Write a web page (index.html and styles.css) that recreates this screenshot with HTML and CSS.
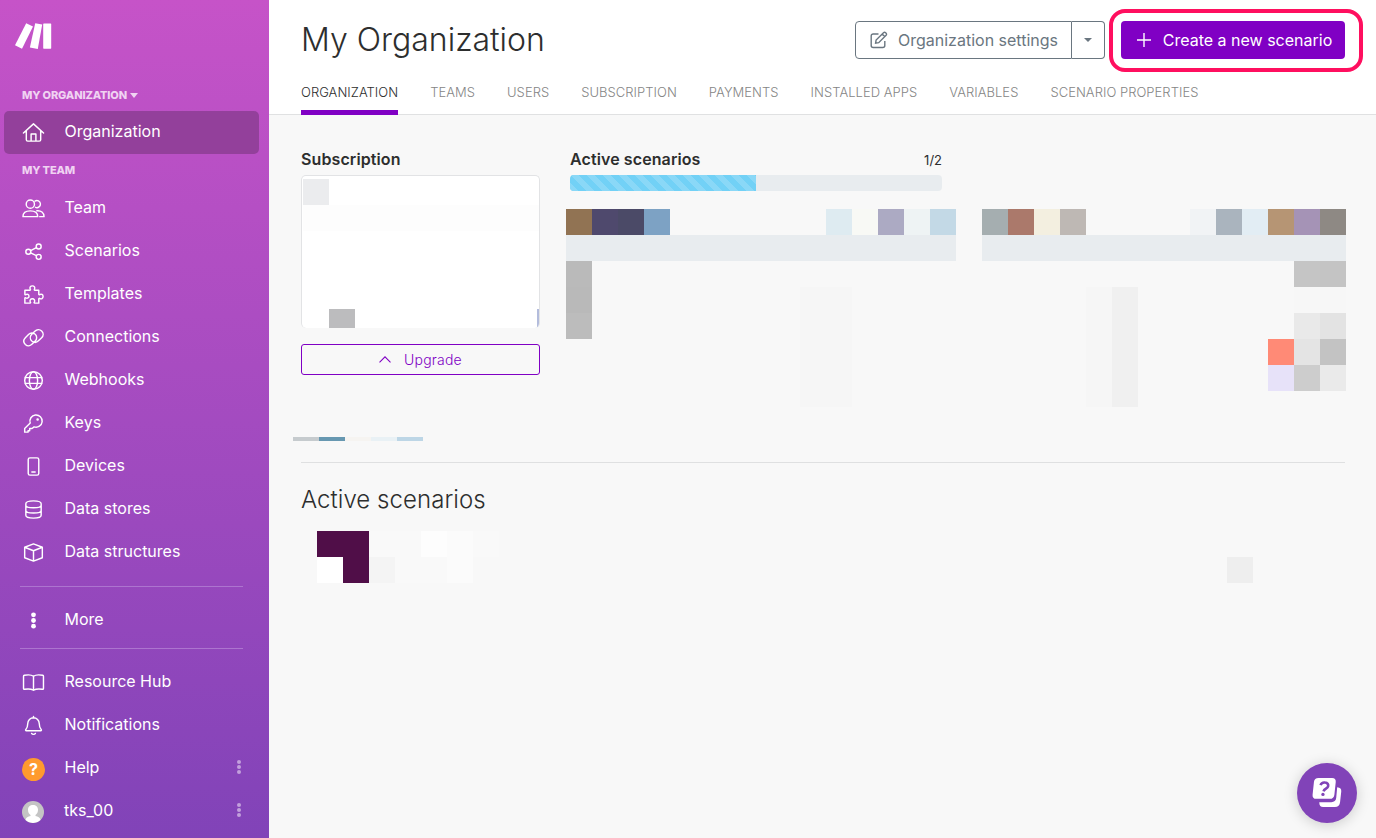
FILE: index.html
```html
<!DOCTYPE html>
<html lang="en">
<head>
  <meta charset="UTF-8">
  <title>My Organization</title>
  <link rel="stylesheet" href="styles.css">
</head>

<body>

<aside class="sidebar">
  <svg class="logo" width="38" height="28" viewBox="0 0 38 28" fill="#fff">
    <path d="M11.2 1.2 18 4.500 7 26.800 0 23.300z"/>
    <path d="M20.200 1.200 27.200 2.600 22.800 26.900 14.900 25.400z"/>
    <rect x="28.200" y="1.400" width="8" height="25.300" rx=".6"/>
  </svg>

  <div class="section-title">MY ORGANIZATION <span class="caret"></span></div>
  <nav>
    <a class="nav-item active">
      <svg class="icon" viewBox="0 0 24 24"><path d="M1.500 12.500 12 3l10.500 9.500M4.500 10v9.500a1.500 1.500 0 0 0 1.500 1.500h12a1.500 1.500 0 0 0 1.500-1.500V10M9.500 21v-7.500h5V21"/></svg>
      Organization
    </a>
  </nav>

  <div class="section-title team">MY TEAM</div>
  <nav>
    <a class="nav-item">
      <svg class="icon" viewBox="0 0 24 24"><circle cx="8.700" cy="7.500" r="4.300"/><path d="M13.500 4.300a3.700 3.700 0 1 1 .6 6.500M1 20.500c0-4 3-6 7.700-6s7.700 2 7.700 6zM15.500 14.300c4.300-.4 7.500 2 7.500 6.200h-4.500"/></svg>
      Team
    </a>
    <a class="nav-item">
      <svg class="icon" viewBox="0 0 24 24"><circle cx="6.600" cy="12.200" r="2.600"/><circle cx="17.400" cy="6.800" r="2.600"/><circle cx="17.400" cy="17.600" r="2.600"/><path d="m9 11 6-3M9 13.400l6 3"/></svg>
      Scenarios
    </a>
    <a class="nav-item">
      <svg class="icon" viewBox="0 0 24 24"><path d="M3 7.500h5.400c.5 0 .6-.5.300-.9C7.500 4.800 8.900 3 10.800 3s3.300 1.800 2.100 3.600c-.3.400-.2.900.3.900h4.300v4.200c0 .5.500.7.900.4 1.800-1.200 3.600.2 3.600 2s-1.800 3.200-3.600 2c-.4-.3-.9-.1-.9.400V21h-4.400c-.5 0-.6-.5-.3-.9 1.200-1.800-.1-3.600-2-3.600s-3.200 1.800-2 3.600c.3.400.2.900-.3.900H3v-5.200c0-.5.500-.7.900-.4 1.600 1.100 3.400 0 3.400-1.700S5.500 11.200 3.900 12.200c-.4.300-.9.100-.9-.4z"/></svg>
      Templates
    </a>
    <a class="nav-item">
      <svg class="icon" viewBox="0 0 24 24"><path d="M10.200 15.700c-2-2-2-5 0-7l3.200-3.200c2-2 5-2.300 7.100-.3 2.100 2.100 2 5 0 7l-3.300 3.300c-1.700 1.700-4 2-6 .9M13.800 8.700c2 2 2 5 0 7l-3.200 3.200c-2 2-5 2.300-7.100.3-2.100-2.100-2-5 0-7l3.300-3.300c1.700-1.700 4-2 6-.9"/></svg>
      Connections
    </a>
    <a class="nav-item">
      <svg class="icon" viewBox="0 0 24 24"><circle cx="12" cy="12" r="9.200"/><ellipse cx="12" cy="12" rx="4.300" ry="9.200"/><path d="M3.500 9h17M3.500 15h17"/></svg>
      Webhooks
    </a>
    <a class="nav-item">
      <svg class="icon" viewBox="0 0 24 24"><path d="M8.600 11.500a6.400 6.400 0 1 1 4 4L10.500 17.200H8v2.300H6.300V21H2.800v-3.800z"/><circle cx="16.300" cy="7.800" r=".6"/></svg>
      Keys
    </a>
    <a class="nav-item">
      <svg class="icon" viewBox="0 0 24 24"><rect x="6.500" y="3" width="11" height="18" rx="1.800"/><path d="M10.300 17.700h3.400"/></svg>
      Devices
    </a>
    <a class="nav-item">
      <svg class="icon" viewBox="0 0 24 24"><path d="M4 6c0-4 16-4 16 0v12c0 4-16 4-16 0zM4 7.500c0 3.600 16 3.600 16 0M4 13c0 3.600 16 3.600 16 0"/></svg>
      Data stores
    </a>
    <a class="nav-item">
      <svg class="icon" viewBox="0 0 24 24"><path d="m12 3 9.200 3.500v11L12 21l-9.200-3.500v-11zM2.800 6.500 12 10.200l9.200-3.700M12 10.200V21"/></svg>
      Data structures
    </a>
  </nav>

  <hr class="divider">
  <nav>
    <a class="nav-item">
      <svg class="icon dots-icon" viewBox="0 0 24 24"><circle cx="12" cy="6.100" r="2.500"/><circle cx="12" cy="12" r="2.500"/><circle cx="12" cy="17.900" r="2.500"/></svg>
      More
    </a>
  </nav>
  <hr class="divider bottom">

  <nav>
    <a class="nav-item">
      <svg class="icon" viewBox="0 0 24 24"><path d="M12 5.500C10 4 5 4 2.500 4.500c-.5.100-.9.500-.9 1v12.700c0 .6.500 1 1.100.9 3-.5 6.800-.4 9.300.9 2.500-1.300 6.300-1.400 9.300-.9.600.1 1.100-.3 1.100-.9V5.500c0-.5-.4-.9-.9-1C19 4 14 4 12 5.500zM12 5.500V20"/></svg>
      Resource Hub
    </a>
    <a class="nav-item">
      <svg class="icon" viewBox="0 0 24 24"><path d="M12 2.500v1.700M4.500 17.500c-.8 0-1-.9-.5-1.400 1.500-1.500 2-3.100 2-6.100a6 6 0 0 1 12 0c0 3 .5 4.600 2 6.100.5.500.3 1.400-.5 1.400zM10 20.300c.8 1.300 3.200 1.300 4 0"/></svg>
      Notifications
    </a>
    <a class="nav-item">
      <span class="help-icon">?</span>
      Help
      <span class="menu-dots"><i></i><i></i><i></i></span>
    </a>
    <a class="nav-item">
      <svg class="avatar" viewBox="0 0 22 22">
        <circle cx="11" cy="11" r="11" fill="#c4c4c4"/>
        <path d="M11 4c3 0 5 2 5 4.800 0 2.400-1 4.200-2.500 5.200v1c2.500.6 4.500 1.400 5 3.900A11 11 0 0 1 11 22a11 11 0 0 1-7.500-3.100c.5-2.500 2.500-3.300 5-3.900v-1C7 13 6 11.200 6 8.800 6 6 8 4 11 4z" fill="#fff"/>
      </svg>
      tks_00
      <span class="menu-dots"><i></i><i></i><i></i></span>
    </a>
  </nav>
</aside>

<main class="main">
  <header class="header">
    <div class="header-top">
      <h1>My Organization</h1>
      <div class="actions">
        <div class="btn-group">
          <button class="btn btn-settings">
            <svg width="18" height="18" viewBox="0 0 18 18"><path d="M8.500 3H3.200C2 3 1.200 3.800 1.200 5v9.500c0 1.200.8 2 2 2h9.600c1.200 0 2-.8 2-2V10M5.600 12.200l.5-3.100 7.400-7.400c.6-.6 1.500-.6 2.100 0l.5.5c.6.6.6 1.500 0 2.100l-7.400 7.400zM12.200 3l2.700 2.700"/></svg>
            Organization settings
          </button>
          <button class="btn btn-drop"><span class="caret"></span></button>
        </div>
        <div class="highlight">
          <button class="btn btn-create">
            <svg width="14" height="14" viewBox="0 0 14 14"><path d="M7 0v14M0 7h14"/></svg>
            Create a new scenario
          </button>
        </div>
      </div>
    </div>
    <nav class="tabs">
      <a class="tab selected">ORGANIZATION</a>
      <a class="tab">TEAMS</a>
      <a class="tab">USERS</a>
      <a class="tab">SUBSCRIPTION</a>
      <a class="tab">PAYMENTS</a>
      <a class="tab">INSTALLED APPS</a>
      <a class="tab">VARIABLES</a>
      <a class="tab">SCENARIO PROPERTIES</a>
    </nav>
  </header>

  <section class="overview">
    <div class="subscription">
      <h3>Subscription</h3>
      <div class="card">
        <svg width="237" height="152" viewBox="0 0 237 152">
          <rect x="1" y="3" width="26" height="26" fill="#ebecee"/>
          <rect x="1" y="29" width="236" height="26" fill="#fdfdfd"/>
          <rect x="27" y="133" width="26" height="19" fill="#bcbcbe"/>
          <rect x="235" y="133" width="2" height="19" fill="#b3bcdc"/>
        </svg>
      </div>
      <button class="btn btn-upgrade">
        <svg width="12" height="7" viewBox="0 0 12 7"><path d="m.5 6.300 5.500-5.500 5.500 5.500"/></svg>
        Upgrade
      </button>
    </div>

    <div class="usage">
      <div class="usage-main">
        <div class="usage-head">
          <h3>Active scenarios</h3>
          <span>1/2</span>
        </div>
        <div class="progress"><div class="progress-bar" style="width: 50%"></div></div>
      </div>
      <!-- hidden usage stats, 26px blocks -->
      <svg class="stats" width="780" height="198" viewBox="0 0 780 198" shape-rendering="crispEdges">
        <rect x="0" y="0" width="26" height="26" fill="#917353"/>
        <rect x="26" y="0" width="26" height="26" fill="#4f496d"/>
        <rect x="52" y="0" width="26" height="26" fill="#4b4a67"/>
        <rect x="78" y="0" width="26" height="26" fill="#7da2c4"/>
        <rect x="260" y="0" width="26" height="26" fill="#deebf1"/>
        <rect x="286" y="0" width="26" height="26" fill="#f8f9f5"/>
        <rect x="312" y="0" width="26" height="26" fill="#acaac3"/>
        <rect x="338" y="0" width="26" height="26" fill="#eef3f4"/>
        <rect x="364" y="0" width="26" height="26" fill="#c3d9e6"/>
        <rect x="0" y="26" width="390" height="26" fill="#e8ecef"/>
        <rect x="0" y="52" width="26" height="26" fill="#bababa"/>
        <rect x="0" y="78" width="26" height="26" fill="#b9b9b9"/>
        <rect x="0" y="104" width="26" height="26" fill="#bcbcbc"/>
        <rect x="234" y="78" width="52" height="120" fill="#f6f6f6"/>

        <rect x="416" y="0" width="26" height="26" fill="#a5aeb0"/>
        <rect x="442" y="0" width="26" height="26" fill="#ab796b"/>
        <rect x="468" y="0" width="26" height="26" fill="#f3efe0"/>
        <rect x="494" y="0" width="26" height="26" fill="#beb8b4"/>
        <rect x="624" y="0" width="26" height="26" fill="#f1f3f5"/>
        <rect x="650" y="0" width="26" height="26" fill="#aab4be"/>
        <rect x="676" y="0" width="26" height="26" fill="#e2edf4"/>
        <rect x="702" y="0" width="26" height="26" fill="#b69574"/>
        <rect x="728" y="0" width="26" height="26" fill="#a593b6"/>
        <rect x="754" y="0" width="26" height="26" fill="#8e8984"/>
        <rect x="416" y="26" width="364" height="26" fill="#e8ecef"/>
        <rect x="520" y="78" width="26" height="120" fill="#f6f6f6"/>
        <rect x="546" y="78" width="26" height="120" fill="#f0f0f0"/>
        <rect x="728" y="52" width="26" height="26" fill="#c5c5c5"/>
        <rect x="754" y="52" width="26" height="26" fill="#c4c4c4"/>
        <rect x="728" y="78" width="52" height="26" fill="#f7f7f7"/>
        <rect x="728" y="104" width="26" height="26" fill="#e9e9e9"/>
        <rect x="754" y="104" width="26" height="26" fill="#e3e3e3"/>
        <rect x="702" y="130" width="26" height="26" fill="#ff8a76"/>
        <rect x="728" y="130" width="26" height="26" fill="#e4e4e4"/>
        <rect x="754" y="130" width="26" height="26" fill="#c3c3c3"/>
        <rect x="702" y="156" width="26" height="26" fill="#e7e2f9"/>
        <rect x="728" y="156" width="26" height="26" fill="#cdcdcd"/>
        <rect x="754" y="156" width="26" height="26" fill="#eaeaea"/>
      </svg>
    </div>
  </section>

  <div class="strip"><i></i><i></i><i></i><i></i><i></i></div>

  <section class="scenarios">
    <h2>Active scenarios</h2>
    <svg class="scenario-row" width="1028" height="52" viewBox="0 0 1028 52" shape-rendering="crispEdges">
      <path d="M0 0h52v52H26V26H0z" fill="#500e48"/>
      <rect x="0" y="26" width="26" height="26" fill="#fff"/>
      <rect x="52" y="0" width="52" height="26" fill="#f9f9f9"/>
      <rect x="104" y="0" width="26" height="26" fill="#fdfdfd"/>
      <rect x="130" y="0" width="26" height="52" fill="#fbfbfb"/>
      <rect x="156" y="0" width="26" height="26" fill="#f9f9f9"/>
      <rect x="52" y="26" width="26" height="26" fill="#f4f4f4"/>
      <rect x="78" y="26" width="52" height="26" fill="#f9f9f9"/>
      <rect x="910" y="26" width="26" height="26" fill="#eee"/>
    </svg>
  </section>
</main>

<button class="chat">
  <svg width="31" height="31" viewBox="0 0 32 32">
    <path d="M26 9.500c3.200.2 4.500 1.700 4.200 4.400l-1.200 11c-.4 3.400-2 5.100-5.400 5.100H11.500C8.900 30 7.500 28.500 7.500 25H20c3 0 4.700-1.500 5-4.500z" fill="#fff"/>
    <path d="M6.700 0h14c2.700 0 4.100 1.500 3.800 4.200l-1.400 13c-.3 2.800-1.900 4.300-4.700 4.300h-14C1.700 21.500.3 20 .6 17.200L2 4.200C2.300 1.500 3.900 0 6.700 0z" fill="#fff"/>
    <path d="M8.800 7.400c.8-2.200 2.600-3 4.700-2.700 2.500.3 3.700 2 3.100 4-.7 2.300-3.900 2.300-4.700 5" fill="none" stroke="#8143b8" stroke-width="2.700"/>
    <circle cx="11.300" cy="17" r="1.700" fill="#8143b8"/>
  </svg>
</button>

</body>
</html>
```
FILE: styles.css
```css
* {
  box-sizing: border-box;
}

body {
  margin: 0;
  display: flex;
  height: 838px;
  overflow: hidden;
  background-color: #f8f8f8;
  color: #2d2e2e;
  font-family: Inter, "Liberation Sans", sans-serif;
  font-size: 16px;
}

h1, h2, h3 {
  margin: 0;
}

/* Sidebar */
.sidebar {
  width: 269px;
  flex: none;
  height: 838px;
  padding-top: 22px;
  background: linear-gradient(#c653c8, #8143b8);
  color: #fff;
}

.logo {
  display: block;
  margin-left: 15px;
}

.section-title {
  display: flex;
  align-items: center;
  height: 32px;
  margin-top: 29px;
  padding-left: 22px;
  font-size: 11px;
  font-weight: 800;
  letter-spacing: -0.15px;
  color: #f0d3f2;
}

.section-title.team {
  margin-top: 0;
}

.caret {
  border: 4px solid transparent;
  border-top-color: currentColor;
  border-bottom: 0;
}

.section-title .caret {
  margin-left: 3px;
  border-width: 5px 4px 0;
}

.nav-item {
  display: flex;
  align-items: center;
  height: 43px;
  margin: 0 10px 0 4px;
  padding: 0 18px 2px 17px;
  border-radius: 5px;
}

.nav-item.active {
  padding-bottom: 3px;
  background-color: #93409b;
}

.icon {
  width: 23px;
  height: 23px;
  margin: 3px 19.500px 0 1px;
  fill: none;
  stroke: #fff;
  stroke-width: 1.5;
  stroke-linejoin: round;
  stroke-linecap: round;
}

.dots-icon {
  fill: #fff;
  stroke: none;
}

.help-icon {
  display: flex;
  align-items: center;
  justify-content: center;
  width: 23px;
  height: 23px;
  margin: 5px 19.500px 0 1px;
  border-radius: 50%;
  background-color: #ff9a2e;
  font-size: 16px;
  font-weight: 700;
}

.avatar {
  width: 22px;
  height: 22px;
  margin: 5px 20px 0 1px;
}

.menu-dots {
  display: flex;
  flex-direction: column;
  gap: 1px;
  margin-left: auto;
}

.menu-dots i {
  width: 4px;
  height: 4px;
  border-radius: 50%;
  background-color: #c2a0dc;
}

.divider {
  height: 1px;
  margin: 13px 26px 11px 20px;
  border: 0;
  background-color: #ad74cf;
}

.divider.bottom {
  margin-top: 7px;
}

/* Header */
.main {
  flex: 1;
}

.header {
  height: 115px;
  padding: 0 31px 0 32px;
  background-color: #fff;
  border-bottom: 1px solid #e0e1e2;
}

.header-top {
  display: flex;
  align-items: center;
  justify-content: space-between;
  height: 80px;
}

h1 {
  font-size: 32px;
  line-height: 40px;
  font-weight: 300;
  letter-spacing: 0;
}

.actions {
  display: flex;
  align-items: center;
  gap: 4px;
  margin-right: -18px;
}

.btn-group {
  display: flex;
}

.btn {
  display: flex;
  align-items: center;
  justify-content: center;
  padding: 0;
  border: 0;
  font-family: inherit;
  font-size: 16px;
}

.btn svg {
  fill: none;
  stroke: currentColor;
  stroke-width: 1.4;
}

.btn-settings {
  width: 217px;
  height: 38px;
  padding-left: 1px;
  gap: 10px;
  border: 1px solid #6a7680;
  border-radius: 4px 0 0 4px;
  background-color: #fff;
  color: #6a7680;
}

.btn-drop {
  width: 33px;
  height: 38px;
  border: 1px solid #6a7680;
  border-left: 0;
  border-radius: 0 4px 4px 0;
  background-color: #fff;
  color: #6a7680;
}

.highlight {
  width: 254px;
  height: 63px;
  padding: 8px;
  border: 4px solid #ff0f5f;
  border-radius: 16px;
}

.btn-create {
  width: 224px;
  height: 38px;
  padding-left: 3px;
  gap: 12px;
  border-radius: 4px;
  background-color: #8000c4;
  color: #fff;
}

.tabs {
  display: flex;
  gap: 32px;
  height: 35px;
}

.tab {
  height: 35px;
  padding-top: 4px;
  font-size: 13px;
  line-height: 16px;
  font-weight: 300;
  letter-spacing: 0.04px;
  white-space: nowrap;
  color: #858585;
}

.tab.selected {
  color: #2d2e2e;
  border-bottom: 5px solid #8000c4;
}

/* Overview */
.overview {
  display: flex;
  gap: 26px;
  padding: 35px 30px 0 32px;
}

h3 {
  height: 25px;
  font-size: 16px;
  line-height: 19px;
  font-weight: 600;
  letter-spacing: 0.1px;
}

.subscription {
  width: 239px;
}

.card {
  height: 153px;
  border: 1px solid #e2e3e5;
  border-bottom: 0;
  border-radius: 5px;
  background-color: #fff;
  overflow: hidden;
}

.card svg {
  display: block;
}

.btn-upgrade {
  width: 239px;
  height: 31px;
  margin-top: 16px;
  gap: 13px;
  border: 1px solid #8000c4;
  border-radius: 3px;
  background-color: transparent;
  color: #8000c4;
  font-size: 14px;
  font-weight: 300;
  letter-spacing: 0.2px;
}

.btn-upgrade svg {
  stroke-width: 1.1;
}

.usage-main {
  width: 376px;
  padding-left: 4px;
}

.usage-head {
  display: flex;
  justify-content: space-between;
  font-size: 13px;
  line-height: 21px;
}

.progress {
  height: 16px;
  border-radius: 4px;
  background-color: #e8ecef;
  overflow: hidden;
}

.progress-bar {
  height: 16px;
  background-color: #72d1f6;
  background-image: linear-gradient(45deg, #8ad8f7 25%, transparent 25%, transparent 50%, #8ad8f7 50%, #8ad8f7 75%, transparent 75%);
  background-size: 16px 16px;
}

.stats {
  display: block;
  margin-top: 18px;
}

.strip {
  display: flex;
  height: 4px;
  margin: 30px 0 0 24px;
}

.strip i {
  width: 26px;
  background-color: #c6cbce;
}

.strip i:nth-child(2) {
  background-color: #6798b1;
}

.strip i:nth-child(3) {
  background-color: #f6f4f1;
}

.strip i:nth-child(4) {
  background-color: #e9f1f5;
}

.strip i:nth-child(5) {
  background-color: #bdd6e6;
}

.scenarios {
  margin: 21px 31px 0 32px;
  padding-top: 22px;
  border-top: 1px solid #dfe0e1;
}

h2 {
  font-size: 24px;
  line-height: 30px;
  font-weight: 300;
  letter-spacing: 0.05px;
}

.scenario-row {
  display: block;
  margin: 16px 0 0 16px;
}

/* Chat button floats over the page */
.chat {
  position: fixed;
  right: 19px;
  bottom: 15px;
  width: 60px;
  height: 60px;
  padding: 1px 0 0 1px;
  display: flex;
  align-items: center;
  justify-content: center;
  border: 0;
  border-radius: 50%;
  background-color: #8143b8;
  box-shadow: 0 2px 14px rgba(0, 0, 0, 0.18);
}
```
